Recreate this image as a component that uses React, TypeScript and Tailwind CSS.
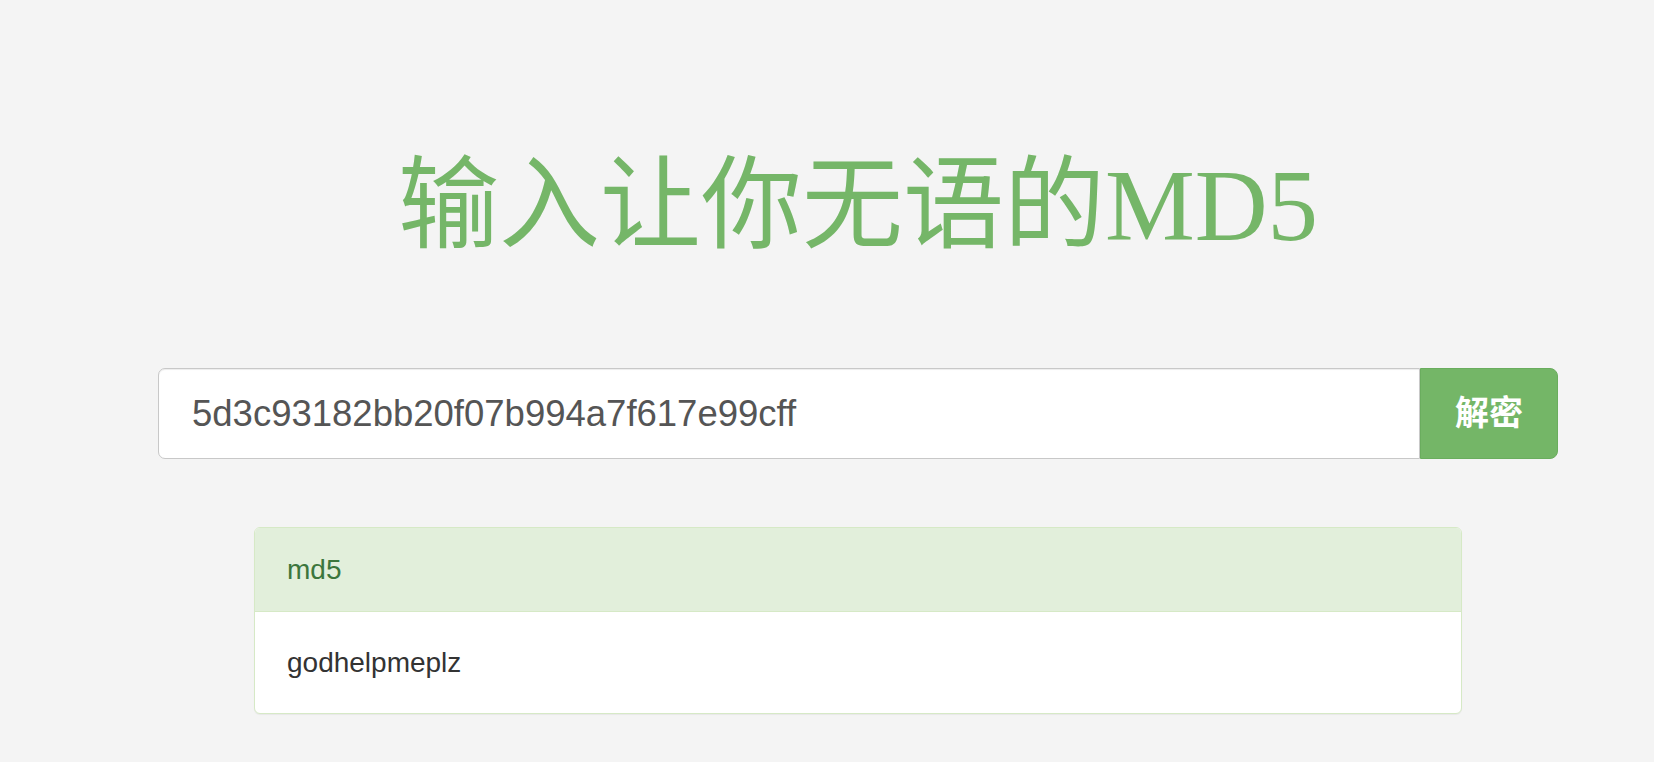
export default function App() {
  return (
    <div className="min-h-screen w-full bg-[#f4f4f4] font-['Liberation_Sans','Noto_Sans_CJK_SC',sans-serif]">
      <div className="ml-[158px] w-[1400px] flex flex-col">
        {/* Title */}
        <h1 className="pt-[156px] text-center text-[101px] leading-[100px] font-normal text-[#75b668] font-['Liberation_Serif','Noto_Sans_CJK_SC',serif]">
          输入让你无语的MD5
        </h1>

        {/* Search */}
        <div className="mt-[112px] flex h-[91px]">
          <input
            className="flex-1 h-full rounded-l-[7px] border border-[#c8c8c8] bg-white pl-[33px] text-[36.5px] text-[#555555] outline-none shadow-[inset_0_1px_1px_rgba(0,0,0,0.075)]"
            defaultValue="5d3c93182bb20f07b994a7f617e99cff"
          />
          <button className="w-[138px] h-full rounded-r-[8px] border border-[#6aad5e] bg-[#74b667] text-white text-[34px] font-bold">
            解密
          </button>
        </div>

        {/* Result */}
        <div className="mt-[68px] mx-[96px] rounded-[6px] border border-[#d6e9c6] bg-white shadow-[0_1px_1px_rgba(0,0,0,0.05)] overflow-hidden">
          <div className="h-[84px] flex items-center px-[32px] bg-[#e2efdb] border-b border-[#d6e9c6] text-[28px] text-[#3c763d]">
            md5
          </div>
          <div className="h-[101px] flex items-center px-[32px] text-[28px] text-[#333333]">
            godhelpmeplz
          </div>
        </div>
      </div>
    </div>
  );
}
